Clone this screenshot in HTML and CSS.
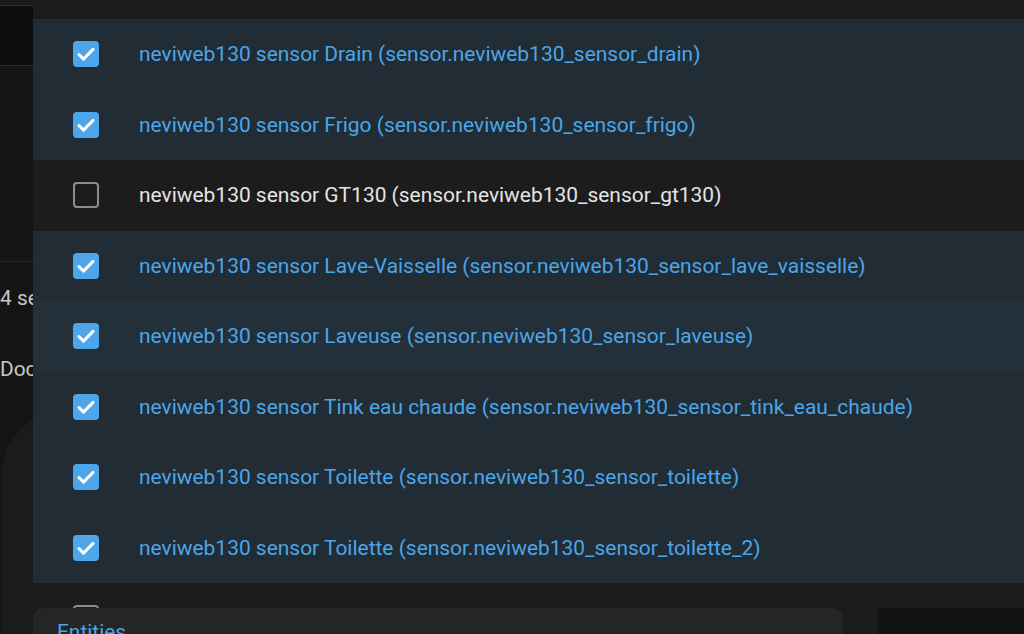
FILE: index.html
```html
<!DOCTYPE html>
<html lang="en">
<head>
    <meta charset="UTF-8">
    <title>Entities</title>
    <link rel="stylesheet" href="styles.css">
</head>
<body>
    <div class="page">
        <aside class="backdrop">
            <div class="bd-top"></div>
            <div class="bd-toolbar"></div>
            <div class="bd-panel"></div>
            <div class="bd-text">
                <p class="bd-line first">4 sensors</p>
                <p class="bd-line">Documentation</p>
            </div>
            <div class="bd-card"></div>
        </aside>

        <main class="main">
            <div class="picker">
                <div class="picker-head"></div>
                <ul class="entity-list">
                    <li class="entity checked"><span class="box"></span><span class="label">neviweb130 sensor Drain (sensor.neviweb130_sensor_drain)</span></li>
                    <li class="entity checked"><span class="box"></span><span class="label">neviweb130 sensor Frigo (sensor.neviweb130_sensor_frigo)</span></li>
                    <li class="entity"><span class="box"></span><span class="label">neviweb130 sensor GT130 (sensor.neviweb130_sensor_gt130)</span></li>
                    <li class="entity checked"><span class="box"></span><span class="label">neviweb130 sensor Lave-Vaisselle (sensor.neviweb130_sensor_lave_vaisselle)</span></li>
                    <li class="entity checked hover"><span class="box"></span><span class="label">neviweb130 sensor Laveuse (sensor.neviweb130_sensor_laveuse)</span></li>
                    <li class="entity checked"><span class="box"></span><span class="label">neviweb130 sensor Tink eau chaude (sensor.neviweb130_sensor_tink_eau_chaude)</span></li>
                    <li class="entity checked"><span class="box"></span><span class="label">neviweb130 sensor Toilette (sensor.neviweb130_sensor_toilette)</span></li>
                    <li class="entity checked"><span class="box"></span><span class="label">neviweb130 sensor Toilette (sensor.neviweb130_sensor_toilette_2)</span></li>
                    <li class="entity"><span class="box"></span><span class="label">neviweb130 sensor Water (sensor.neviweb130_sensor_water)</span></li>
                </ul>
            </div>
            <div class="below">
                <div class="card"><span class="card-title">Entities</span></div>
                <div class="gutter"></div>
                <div class="side"></div>
            </div>
        </main>
    </div>

    <svg width="0" height="0" class="defs">
        <symbol id="tick" viewBox="0 0 24 24">
            <path d="M5.5 12.5l4.2 4.2 8.8-9" fill="none" stroke="#fff" stroke-width="2.8" stroke-linecap="round" stroke-linejoin="round"/>
        </symbol>
    </svg>
    <script>
        document.querySelectorAll('.entity.checked .box').forEach(function(box) {
            box.innerHTML = '<svg viewBox="0 0 24 24"><use href="#tick"/></svg>';
        });
    </script>
</body>
</html>
```

FILE: styles.css
```css
* {
    margin: 0;
    padding: 0;
    box-sizing: border-box;
}

html, body {
    width: 1024px;
    height: 634px;
    overflow: hidden;
    background-color: #111111;
    font-family: Roboto, "Noto Sans", sans-serif;
}

.page {
    display: flex;
    height: 634px;
}

/* page behind the dialog */
.backdrop {
    width: 33px;
    flex-shrink: 0;
    overflow: hidden;
    background-color: #141414;
    display: flex;
    flex-direction: column;
}

.bd-top {
    height: 6px;
    background-color: #1a1a1a;
    border-bottom: 1px solid #2e2e2e;
    flex-shrink: 0;
}

.bd-toolbar {
    height: 60px;
    background-color: #0c0c0c;
    border-bottom: 1px solid #2e2e2e;
    flex-shrink: 0;
}

.bd-panel {
    height: 196px;
    background-color: #141414;
    border-bottom: 1px solid #272727;
    flex-shrink: 0;
}

.bd-text {
    padding-top: 24px;
    white-space: nowrap;
}

.bd-line {
    font-size: 20.9px;
    color: #c8c8c8;
    line-height: 24px;
    height: 71px;
}

.bd-card {
    flex: 1;
    margin-top: -16px;
    margin-left: 2px;
    width: 120px;
    background-color: #1b1b1b;
    border-top-left-radius: 60px;
}

.main {
    flex: 1;
    display: flex;
    flex-direction: column;
    min-width: 0;
}

.picker {
    height: 608px;
    overflow: hidden;
    background-color: #1c1c1c;
    flex-shrink: 0;
}

.picker-head {
    height: 19px;
    background-color: #1c1c1c;
}

.entity-list {
    list-style: none;
}

.entity {
    height: 70.5px;
    display: flex;
    align-items: center;
    padding-left: 40px;
    white-space: nowrap;
    background-color: #1c1c1c;
}

.entity.checked {
    background-color: #222c35;
}

.entity.hover {
    background-color: #243039;
}

.box {
    width: 26px;
    height: 26px;
    flex-shrink: 0;
    border: 2px solid #8c8c8c;
    border-radius: 4px;
    margin-right: 40px;
}

.entity.checked .box {
    border: none;
    background-color: #4ea6ea;
}

.box svg {
    display: block;
    width: 26px;
    height: 26px;
}

.label {
    font-size: 20.95px;
    color: #e4e4e4;
}

.entity.checked .label {
    color: #4aa6e8;
}

.below {
    flex: 1;
    display: flex;
    background-color: #1b1b1b;
}

.card {
    width: 810px;
    background-color: #252525;
    border-top-left-radius: 10px;
    border-top-right-radius: 10px;
    padding: 12px 0 0 24px;
    overflow: hidden;
}

.card-title {
    font-size: 20.9px;
    color: #4aa6e8;
    line-height: 24px;
}

.gutter {
    width: 35px;
    background-color: #1b1b1b;
}

.side {
    flex: 1;
    background-color: #111111;
}

.defs {
    position: absolute;
}
```
